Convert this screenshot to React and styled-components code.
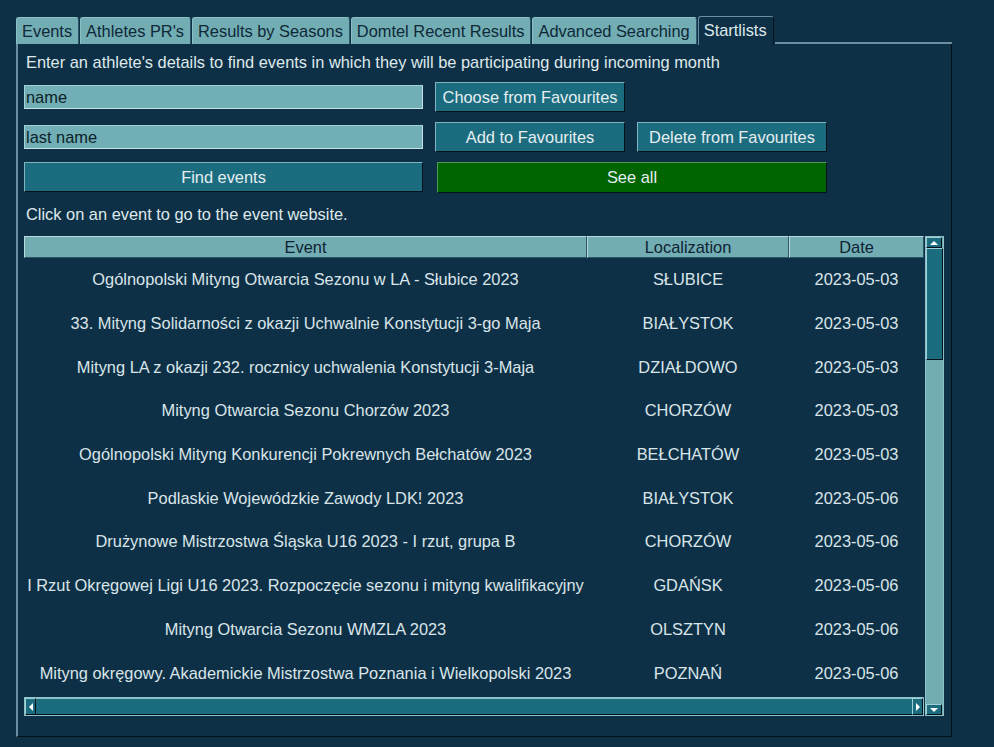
import styled, { createGlobalStyle } from 'styled-components';

const GlobalStyle = createGlobalStyle`
    html, body {
        margin: 0;
        padding: 0;
        background: #0e3046;
    }
    body {
        font-family: "Liberation Sans", Arial, sans-serif;
        font-size: 16.4px;
    }
`;

const FONT = '16.4px';

const TABS = ['Events', "Athletes PR's", 'Results by Seasons', 'Domtel Recent Results', 'Advanced Searching', 'Startlists'];

const EVENTS = [
    ['Ogólnopolski Mityng Otwarcia Sezonu w LA - Słubice 2023', 'SŁUBICE', '2023-05-03'],
    ['33. Mityng Solidarności z okazji Uchwalnie Konstytucji 3-go Maja', 'BIAŁYSTOK', '2023-05-03'],
    ['Mityng LA z okazji 232. rocznicy uchwalenia Konstytucji 3-Maja', 'DZIAŁDOWO', '2023-05-03'],
    ['Mityng Otwarcia Sezonu Chorzów 2023', 'CHORZÓW', '2023-05-03'],
    ['Ogólnopolski Mityng Konkurencji Pokrewnych Bełchatów 2023', 'BEŁCHATÓW', '2023-05-03'],
    ['Podlaskie Wojewódzkie Zawody LDK! 2023', 'BIAŁYSTOK', '2023-05-06'],
    ['Drużynowe Mistrzostwa Śląska U16 2023 - I rzut, grupa B', 'CHORZÓW', '2023-05-06'],
    ['I Rzut Okręgowej Ligi U16 2023. Rozpoczęcie sezonu i mityng kwalifikacyjny', 'GDAŃSK', '2023-05-06'],
    ['Mityng Otwarcia Sezonu WMZLA 2023', 'OLSZTYN', '2023-05-06'],
    ['Mityng okręgowy. Akademickie Mistrzostwa Poznania i Wielkopolski 2023', 'POZNAŃ', '2023-05-06'],
];

const App = () => {
    return (
        <>
            <GlobalStyle />
            <Window>
                <TabBar>
                    {TABS.map((t) => (
                        <Tab key={t} $active={t === 'Startlists'}>{t}</Tab>
                    ))}
                    <TabFiller />
                </TabBar>
                <Panel>
                    <Note>Enter an athlete's details to find events in which they will be participating during incoming month</Note>
                    <Form>
                        <Field defaultValue="name" />
                        <Button>Choose from Favourites</Button>
                        <span />
                        <Field defaultValue="last name" />
                        <Button>Add to Favourites</Button>
                        <Button>Delete from Favourites</Button>
                        <Button>Find events</Button>
                        <Button $green $wide>See all</Button>
                    </Form>
                    <Note $small>Click on an event to go to the event website.</Note>
                    <TableFrame>
                        <TableArea>
                            <HeaderRow>
                                <HeadCell>Event</HeadCell>
                                <HeadCell>Localization</HeadCell>
                                <HeadCell>Date</HeadCell>
                            </HeaderRow>
                            <Body>
                                {EVENTS.map(([name, place, date]) => (
                                    <Row key={name}>
                                        <Cell><span>{name}</span></Cell>
                                        <Cell><span>{place}</span></Cell>
                                        <Cell><span>{date}</span></Cell>
                                    </Row>
                                ))}
                            </Body>
                            <HScroll>
                                <Arrow>
                                    <svg width="6" height="8" viewBox="0 0 6 8"><path d="M5 0 L1 4 L5 8 Z" fill="#fff" /></svg>
                                </Arrow>
                                <HThumb />
                                <Arrow>
                                    <svg width="6" height="8" viewBox="0 0 6 8"><path d="M1 0 L5 4 L1 8 Z" fill="#fff" /></svg>
                                </Arrow>
                            </HScroll>
                        </TableArea>
                        <VScroll>
                            <Arrow $v>
                                <svg width="8" height="6" viewBox="0 0 8 6"><path d="M0 5 L4 1 L8 5 Z" fill="#fff" /></svg>
                            </Arrow>
                            <VThumb />
                            <VTrough />
                            <Arrow $v>
                                <svg width="8" height="6" viewBox="0 0 8 6"><path d="M0 1 L4 5 L8 1 Z" fill="#fff" /></svg>
                            </Arrow>
                        </VScroll>
                    </TableFrame>
                </Panel>
            </Window>
        </>
    );
};

const Window = styled.div`
    padding: 15px 0 0 16px;
    width: 936px;
`;

const TabBar = styled.div`
    display: flex;
    align-items: flex-end;
    height: 29px;
`;

const Tab = styled.div`
    height: ${(p) => (p.$active ? '29px' : '27px')};
    box-sizing: border-box;
    padding: 0 6px 0 5px;
    margin-right: 1px;
    display: flex;
    align-items: center;
    background: ${(p) => (p.$active ? '#0e3046' : '#72adb4')};
    color: ${(p) => (p.$active ? '#dfe9ec' : '#0e2837')};
    border-top: 1px solid ${(p) => (p.$active ? '#6c8ea0' : '#8cc0c6')};
    border-left: 1px solid ${(p) => (p.$active ? '#6c8ea0' : '#8cc0c6')};
    border-right: 1px solid ${(p) => (p.$active ? '#05131c' : '#2d5a68')};
    border-radius: 3px 3px 0 0;
    white-space: nowrap;
    ${(p) => (p.$active ? 'margin-bottom: -1px; position: relative; z-index: 1; padding-bottom: 1px;' : '')}
`;

const TabFiller = styled.div`
    flex: 1;
    border-bottom: 2px solid #6c8ea0;
`;

const Panel = styled.div`
    height: 693px;
    box-sizing: border-box;
    border-left: 2px solid #6c8ea0;
    border-right: 1px solid #030f16;
    border-bottom: 1px solid #030f16;
    padding: 8px 8px 0 6px;
    color: #dfe9ec;
`;

const Note = styled.div`
    font-size: ${FONT};
    margin: ${(p) => (p.$small ? '11px 0 0 2px' : '0 0 0 2px')};
    height: ${(p) => (p.$small ? '33px' : '30px')};
    line-height: ${(p) => (p.$small ? '22px' : '20px')};
    color: #dfe9ec;
`;

const Form = styled.div`
    display: grid;
    grid-template-columns: 399px 190px 190px;
    grid-auto-rows: 30px;
    column-gap: 12px;
    row-gap: 10px;
    align-items: center;
`;

const Field = styled.input`
    height: 24px;
    box-sizing: border-box;
    width: 100%;
    margin: 0;
    padding: 0 1px;
    background: #72aeb5;
    border: 1px solid #a4d0d6;
    border-right-color: #c8e4e8;
    border-bottom-color: #c8e4e8;
    color: #0b1e28;
    font-family: "Liberation Sans", Arial, sans-serif;
    font-size: ${FONT};
    outline: none;
`;

const Button = styled.button`
    height: ${(p) => (p.$wide ? '31px' : '30px')};
    box-sizing: border-box;
    margin: 0;
    padding: 0;
    grid-column: ${(p) => (p.$wide ? '2 / 4' : 'auto')};
    ${(p) => (p.$wide ? 'margin-left: 2px;' : '')}
    background: ${(p) => (p.$green ? '#006400' : '#1b6c7f')};
    color: #e6eef0;
    border: 1px solid ${(p) => (p.$green ? '#4f9a55' : '#7fb4c0')};
    border-right-color: #03121a;
    border-bottom-color: #03121a;
    font-family: "Liberation Sans", Arial, sans-serif;
    font-size: ${FONT};
`;

const TableFrame = styled.div`
    display: flex;
    width: 920px;
    height: 480px;
`;

const TableArea = styled.div`
    flex: 1;
    display: flex;
    flex-direction: column;
    min-width: 0;
`;

const COLS = '563px 202px 135px';

const HeaderRow = styled.div`
    display: grid;
    grid-template-columns: ${COLS};
    height: 22px;
`;

const HeadCell = styled.div`
    box-sizing: border-box;
    background: #72adb4;
    color: #0e2332;
    border: 1px solid #b6dade;
    border-right-color: #2b5461;
    border-bottom-color: #2b5461;
    display: flex;
    align-items: center;
    justify-content: center;
    font-size: ${FONT};
`;

const Body = styled.div`
    flex: 1;
    overflow: hidden;
`;

const Row = styled.div`
    display: grid;
    grid-template-columns: ${COLS};
    height: 43.7px;
`;

const Cell = styled.div`
    display: flex;
    align-items: center;
    justify-content: center;
    overflow: hidden;
    white-space: nowrap;
    color: #d9e5e9;
    font-size: ${FONT};
    span {
        flex-shrink: 0;
    }
`;

const HScroll = styled.div`
    height: 19px;
    box-sizing: border-box;
    display: flex;
    border: 1px solid #8fc1c8;
    background: #1b6c7f;
`;

const Arrow = styled.div`
    width: ${(p) => (p.$v ? '16px' : '11px')};
    height: ${(p) => (p.$v ? '11px' : '17px')};
    box-sizing: border-box;
    display: flex;
    align-items: center;
    justify-content: center;
    background: #1b6c7f;
    border: 1px solid #9fd0d6;
    border-right-color: #03121a;
    border-bottom-color: #03121a;
    flex-shrink: 0;
`;

const HThumb = styled.div`
    flex: 1;
    background: #1b6c7f;
    border-top: 1px solid #8fc1c8;
    border-bottom: 1px solid #03121a;
`;

const VScroll = styled.div`
    width: 19px;
    margin-left: 1px;
    box-sizing: border-box;
    display: flex;
    flex-direction: column;
    background: #72adb4;
    border: 1px solid #8fc1c8;
`;

const VThumb = styled.div`
    height: 112px;
    background: #1b6c7f;
    border: 1px solid #9fd0d6;
    border-right-color: #03121a;
    border-bottom-color: #03121a;
    box-sizing: border-box;
`;

const VTrough = styled.div`
    flex: 1;
`;

export default App;
